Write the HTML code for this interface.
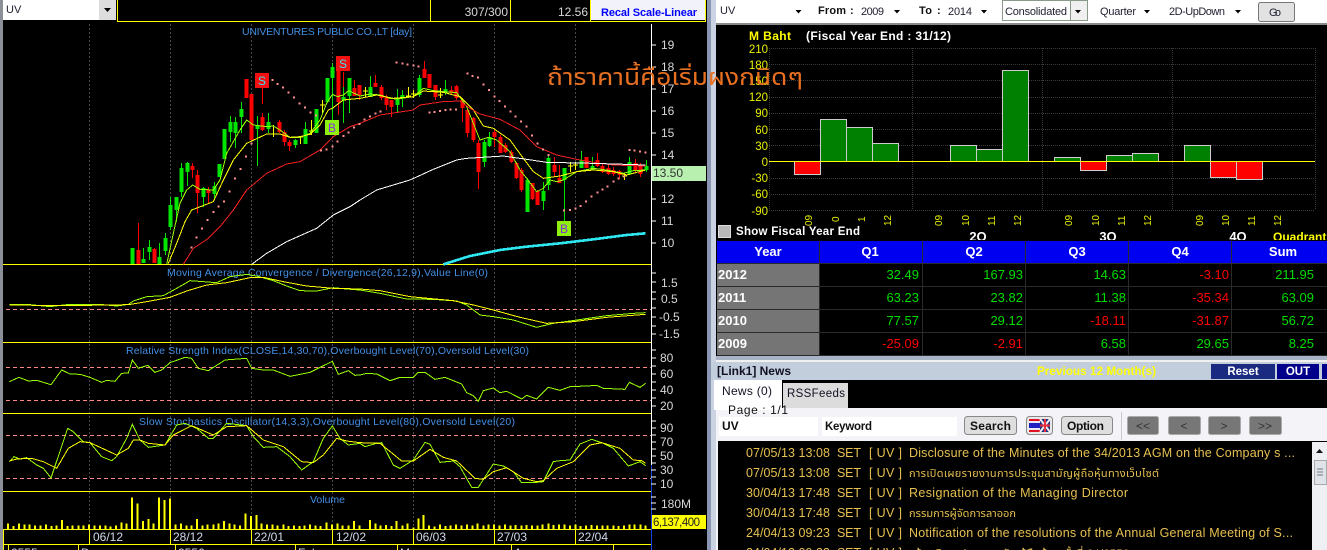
<!DOCTYPE html>
<html><head><meta charset="utf-8"><title>UV</title>
<style>
html,body{margin:0;padding:0;background:#000;width:1327px;height:550px;overflow:hidden}
svg{display:block;position:absolute;left:0;top:0}
text{font-family:"Liberation Sans","Noto Sans Thai","Loma","Garuda","DejaVu Sans","Noto Sans CJK JP",sans-serif}
.c{shape-rendering:crispEdges}
.ax{fill:#d8d8d8;font-size:12px}
.ttl{fill:#428fe6;font-size:10.5px}
.dt{fill:#d0d8e8;font-size:12px}
.yl{fill:#e8f000;font-size:11.5px;text-anchor:end}
.xl{fill:#e8f000;font-size:10px}
.yr{fill:#fff;font-size:13px;font-weight:bold}
.g{fill:#0d0;font-size:13px;text-anchor:end}
.r{fill:#f00;font-size:13px;text-anchor:end}
.h{fill:#fff;font-size:13px;font-weight:bold;text-anchor:middle}
.n{fill:#e6c050;font-size:12.5px}
.tb{fill:#223;font-size:11px}
.bd{fill:#111;font-size:11px;font-weight:bold}
</style></head><body>
<svg width="1327" height="550" viewBox="0 0 1327 550" xmlns="http://www.w3.org/2000/svg">
<rect width="1327" height="550" fill="#000"/>
<!-- left strip -->
<rect x="0" y="0" width="3" height="550" fill="#8a8f98"/>
<!-- left top bar -->
<rect x="3" y="0" width="113" height="20" fill="#fff"/>
<rect x="99" y="0" width="17" height="20" fill="#ddd"/>
<path d="M104 8h7l-3.500 4z" fill="#000"/>
<text x="6" y="13" class="tb" fill="#223">UV</text>
<path d="M117.500 0V21.500H705.500V0M430.500 0V21M510.500 0V21M590.500 0V21" fill="none" stroke="#ff0"/>
<text x="508" y="16" class="ax" text-anchor="end">307/300</text>
<text x="588" y="16" class="ax" text-anchor="end">12.56</text>
<rect x="591" y="0" width="114" height="20" fill="#f2f2fa"/>
<text x="601" y="16" fill="#00f" font-size="11px" font-weight="bold" textLength="96">Recal Scale-Linear</text>
<!-- grid -->
<path d="M89.500 24V529M170.500 24V529M251.500 24V529M332.500 24V529M413.500 24V529M494.500 24V529M575.500 24V529" stroke="#4a4a4a" stroke-dasharray="2 2" fill="none"/>
<!-- panel lines -->
<path d="M3 264.500H651M3 342.500H651M3 413.500H651M3 491.500H651M3 529.500H651M3 544.500H651" stroke="#ff0" fill="none"/>
<path d="M3.500 529V550M8.500 544V550M78.500 544V550M175.500 544V550M295.500 544V550M397.500 544V550M511.500 544V550M613.500 544V550M89.500 529V544M170.500 529V544M251.500 529V544M332.500 529V544M413.500 529V544M494.500 529V544M575.500 529V544" stroke="#ff0" fill="none"/>
<!-- axis -->
<path d="M651.500 24V465" stroke="#fff" fill="none"/>
<path d="M651.500 465V550" stroke="#1a3fe0" fill="none"/>
<path class="c" d="M651 45h5M651 67h5M651 89h5M651 111h5M651 133h5M651 155h5M651 177h5M651 199h5M651 221h5M651 243h5M651 273h5M651 282h5M651 292h5M651 299h5M651 308h5M651 317h5M651 326h5M651 334h5M651 350h5M651 358h5M651 366h5M651 374h5M651 382h5M651 390h5M651 398h5M651 406h5M651 421h5M651 428h5M651 435h5M651 442h5M651 449h5M651 456h5M651 463h5M651 470h5M651 477h5M651 484h5M651 497h5M651 503h5M651 509h5" stroke="#fff" fill="none"/>
<g class="ax">
<text x="661" y="49">19</text><text x="661" y="71">18</text><text x="661" y="93">17</text><text x="661" y="115">16</text><text x="661" y="137">15</text><text x="661" y="159">14</text><text x="661" y="203">12</text><text x="661" y="225">11</text><text x="661" y="247">10</text>
<text x="661" y="287">1.5</text><text x="661" y="303">0.5</text><text x="659" y="321">-0.5</text><text x="659" y="338">-1.5</text>
<text x="660" y="362">80</text><text x="660" y="378">60</text><text x="660" y="394">40</text><text x="660" y="410">20</text>
<text x="660" y="432">90</text><text x="660" y="446">70</text><text x="660" y="460">50</text><text x="660" y="474">30</text><text x="660" y="488">10</text>
<text x="661" y="508">180M</text>
</g>
<rect x="652" y="166" width="54" height="15" fill="#b8f0b0"/>
<text x="653" y="177" fill="#333" font-size="12px">13.50</text>
<rect x="652" y="515" width="54" height="14" fill="#ff0"/>
<text x="653" y="526" fill="#222" font-size="11.500px" textLength="47">6,137,400</text>
<!-- titles -->
<text x="242" y="35" class="ttl" textLength="170">UNIVENTURES PUBLIC CO.,LT [day]</text>
<text x="167" y="276" class="ttl" textLength="321">Moving Average Convergence / Divergence(26,12,9),Value Line(0)</text>
<text x="126" y="354" class="ttl" textLength="403">Relative Strength Index(CLOSE,14,30,70),Overbought Level(70),Oversold Level(30)</text>
<text x="139" y="425" class="ttl" textLength="376">Slow Stochastics Oscillator(14,3,3),Overbought Level(80),Oversold Level(20)</text>
<text x="310" y="503" class="ttl" textLength="35">Volume</text>
<!-- dates -->
<g class="dt"><text x="93" y="541">06/12</text><text x="173" y="541">28/12</text><text x="254" y="541">22/01</text><text x="336" y="541">12/02</text><text x="416" y="541">06/03</text><text x="497" y="541">27/03</text><text x="578" y="541">22/04</text>
<text x="11" y="557">2555</text><text x="81" y="557">D</text><text x="178" y="557">2556</text><text x="298" y="557">Feb</text><text x="400" y="557">Mar</text><text x="514" y="557">Apr</text></g>

<!-- candles -->
<g class="c">
<path fill="none" stroke="#00e600" stroke-width="1" d="M143.500 248V263M149.500 240V260M159.500 243V264M165.500 233V255M170.500 197V230M176.500 197V222M181.500 163V197M187.500 162V186M203.500 187V207M214.500 182V200M224.500 129V159M230.500 116V142M235.500 117V148M241.500 102V133M257.500 116V166M268.500 113V133M295.500 139V148M305.500 122V144M316.500 109V133M332.500 63V127M343.500 85V123M349.500 78V113M370.500 76V97M397.500 89V112M402.500 90V107M419.500 75V97M445.500 80V95M484.500 140V167M489.500 132V147M527.500 178V212M543.500 182V210M548.500 155V190M564.500 168V222M581.500 151V168M592.500 157V170M629.500 157V175M646.500 160V172"/>
<path fill="none" stroke="#00e600" stroke-width="4" d="M132.500 248V264M143.500 259V263M149.500 247V252M159.500 257V264M165.500 238V251M170.500 205V227M176.500 197V210M181.500 168V192M187.500 163V172M203.500 188V197M214.500 186V194M219.500 164V177M224.500 129V159M230.500 122V132M235.500 122V133M241.500 109V117M257.500 125V129M268.500 122V129M295.500 140V145M305.500 129V144M316.500 109V133M327.500 78V102M332.500 67V78M343.500 97V100M349.500 78V96M370.500 87V97M397.500 99V105M402.500 95V98M419.500 78V95M445.500 89V93M484.500 142V162M489.500 137V146M527.500 180V212M543.500 191V201M548.500 158V185M564.500 168V180M581.500 160V168M592.500 166V170M629.500 162V174M646.500 166V170"/>
<path fill="none" stroke="#f00" stroke-width="1" d="M138.500 223V264M154.500 248V263M192.500 163V178M197.500 170V213M208.500 187V203M262.500 88V104M262.500 113V131M279.500 120V133M284.500 130V146M289.500 140V151M338.500 63V115M343.500 72V87M354.500 80V96M359.500 85V100M375.500 75V87M381.500 85V100M386.500 95V110M391.500 100V117M424.500 61V78M435.500 85V100M451.500 86V95M456.500 85V100M462.500 98V122M467.500 108V137M473.500 117V142M478.500 140V189M494.500 130V147M500.500 135V153M505.500 143V153M511.500 150V163M516.500 162V179M521.500 168V192M532.500 183V200M537.500 190V205M554.500 157V177M559.500 165V183M586.500 157V168M597.500 153V167M602.500 163V173M608.500 165V175M613.500 167V176M619.500 170V179M635.500 159V172M640.500 163V177"/>
<path fill="none" stroke="#f00" stroke-width="4" d="M138.500 250V264M154.500 249V263M192.500 166V170M197.500 175V193M208.500 190V193M246.500 79V98M251.500 94V140M262.500 117V130M279.500 122V132M284.500 132V142M289.500 142V146M338.500 70V102M354.500 88V96M359.500 85V95M375.500 83V87M381.500 87V98M386.500 97V105M391.500 100V107M424.500 69V78M429.500 74V88M435.500 85V97M451.500 90V93M456.500 86V98M462.500 100V108M467.500 110V133M473.500 118V140M478.500 143V172M494.500 132V137M500.500 137V153M505.500 145V152M511.500 152V162M516.500 163V178M521.500 170V190M532.500 183V199M537.500 191V205M554.500 165V172M559.500 178V183M586.500 157V168M597.500 160V166M602.500 166V172M608.500 168V174M613.500 170V174M619.500 171V175M635.500 163V171M640.500 166V174"/>
<path fill="none" stroke="#ff0" stroke-width="1" d="M273.500 125V137M271 134h5M300.500 136V144M298 137h5M311.500 120V135M309 131h5M322.500 100V113M320 105h5M365.500 87V97M363 91h5M408.500 87V97M406 96h5M413.500 90V98M411 94h5M440.500 88V98M438 95h5M570.500 162V172M568 166h5M575.500 162V170M573 165h5M624.500 173V180M622 176h5"/>
</g>
<!-- MAs zoom1 -->
<g class="c" transform="scale(.33333)" fill="none">
<path stroke="#9f0" stroke-width="3" d="M500 793L520 700 540 610 560 570 578 555 600 568 640 570 660 540 680 460 720 390 740 360 760 375 800 380 820 378 840 390 870 412 900 412 930 400 960 360 980 310 997 283 1012 290 1030 285 1046 272 1080 288"/>
<path stroke="#ff0" stroke-width="3" d="M505 790L530 730 555 665 575 630 640 605 670 540 700 480 740 430 800 402 840 402 870 412 900 410 930 403 960 375 985 330 997 325 1030 300 1080 295"/>
<path stroke="#f02020" stroke-width="3" d="M550 793L580 745 625 715 660 680 700 630 740 570 800 520 860 492 900 485 960 450 1000 410 1050 380 1080 370"/>
<path stroke="#fff" stroke-width="3" d="M755 793L800 760 860 725 950 685 1000 645 1050 620 1080 600"/>
</g>
<g class="c" transform="translate(360,0) scale(.33333)" fill="none">
<path stroke="#9f0" stroke-width="3" d="M0 288L30 282 60 285 90 295 110 297 160 290 190 265 220 272 290 278 320 320 340 370 360 420 385 412 410 420 450 455 480 510 500 535 530 575 550 565 570 540 590 545 610 540 650 515 700 505 740 510 790 520 820 512 857 510"/>
<path stroke="#ff0" stroke-width="3" d="M0 295L50 285 100 295 160 290 190 273 250 277 300 290 340 330 370 378 400 385 450 420 490 475 520 515 550 535 600 528 650 515 700 510 760 515 800 525 857 510"/>
<path stroke="#f02020" stroke-width="3" d="M0 370L60 345 160 330 180 315 250 305 300 303 330 325 360 342 420 358 480 390 530 440 590 465 650 478 720 490 760 495 857 498"/>
<path stroke="#fff" stroke-width="3" d="M0 600L50 570 150 540 220 508 290 480 320 475 430 468 500 478 560 487 700 490 857 495"/>
<path stroke="#2ee6f0" stroke-width="8" d="M250 793L330 768 420 750 500 740 600 730 700 718 800 705 857 700"/>
</g>
<!-- SAR -->
<g class="c" transform="scale(.33333)" fill="none" stroke="#ff9090" stroke-width="6">
<path d="M572 742h6M587 712h6M603 685h6M620 660h6M637 636h6M653 620h6M669 604h6M685 575h6M702 535h6M718 507h6M735 469h6M751 430h6M815 240h6M830 252h6M846 263h6M863 277h6M879 292h6M896 310h6M912 323h6M929 338h6M945 347h6M960 452h6M977 448h6M994 440h6M1009 424h6M1027 408h6M1042 397h6M1059 382h6M1075 372h6"/>
</g>
<g class="c" transform="translate(360,0) scale(.33333)" fill="none" stroke="#ff9090" stroke-width="6">
<path d="M11 358h6M27 350h6M43 340h6M59 335h6M107 187h6M124 190h6M140 193h6M157 197h6M173 200h6M205 338h6M221 336h6M237 333h6M253 330h6M269 328h6M285 328h6M319 220h6M335 228h6M351 232h6M367 253h6M384 270h6M400 290h6M416 303h6M432 320h6M448 335h6M464 350h6M480 365h6M497 380h6M513 407h6M529 430h6M546 448h6M562 465h6M609 632h6M627 630h6M643 625h6M659 618h6M675 605h6M692 590h6M709 577h6M724 568h6M740 560h6M757 545h6M773 535h6M789 530h6M805 450h6M821 452h6M837 455h6M853 458h6"/>
</g>
<!-- markers -->
<rect x="255" y="73" width="14" height="15" fill="#f01010"/><text x="258" y="85" fill="#40e0f0" font-size="12px">S</text>
<rect x="336" y="56" width="14" height="15" fill="#f01010"/><text x="339" y="68" fill="#40e0f0" font-size="12px">S</text>
<rect x="325" y="120" width="14" height="15" fill="#8fef10"/><text x="328" y="132" fill="#8030e0" font-size="12px">B</text>
<rect x="557" y="221" width="14" height="15" fill="#8fef10"/><text x="560" y="233" fill="#8030e0" font-size="12px">B</text>
<!-- dashed levels -->
<path d="M6 309.500H651M6 367.500H651M6 400.500H651M6 435.500H651M6 478.500H651" stroke="#f88" stroke-dasharray="4 3" fill="none"/>
<!-- indicators -->
<g class="c" transform="translate(0,260) scale(.33333)" fill="none" stroke-width="3">
<path stroke="#9f0" d="M28 133L80 133 150 140 200 134 300 133 350 138 385 133 400 123 440 110 490 107 530 85 570 62 610 65 650 68 690 50 740 43 770 48 820 62 860 78 900 92 950 93 1000 83 1040 87 1080 90"/>
<path stroke="#ff0" d="M28 135L200 137 385 134 440 125 510 112 560 93 620 75 680 68 750 53 790 52 850 65 920 78 1000 85 1080 87"/>
<path stroke="#9f0" d="M28 365L57 352 85 363 110 361 153 374 185 330 210 342 240 343 270 352 305 367 320 361 345 364 365 340 385 339 397 300 415 325 443 316 465 337 485 330 510 308 555 292 575 295 595 325 625 332 675 300 740 295 755 325 790 330 820 330 870 349 930 337 997 304 1015 343 1045 332 1065 346 1080 345"/>
<path stroke="#9f0" d="M28 605L42 590 60 597 80 593 110 615 130 625 153 654 203 505 220 515 250 545 270 548 305 590 335 602 350 590 380 535 397 493 420 540 445 562 495 555 530 495 555 490 590 505 625 535 640 535 680 490 740 497 760 530 790 562 830 560 870 590 905 630 940 605 970 535 997 498 1020 535 1045 555 1080 550"/>
<path stroke="#ff0" d="M28 603L50 597 95 595 130 605 170 625 205 565 240 545 270 548 350 585 385 565 400 540 420 540 445 550 495 555 520 525 575 497 640 525 680 500 740 497 790 540 850 560 905 605 940 608 970 585 1010 535 1040 543 1080 548"/>
<path stroke="#ff0" stroke-width="6" d="M24 808V790M40 808V798M57 808V790M73 808V793M89 808V793M105 808V796M121 808V796M138 808V793M154 808V798M170 808V796M186 808V780M202 808V798M218 808V796M235 808V796M251 808V796M267 808V793M283 808V797M300 808V797M316 808V797M332 808V799M348 808V796M364 808V787M380 808V790M396 808V712M413 808V730M429 808V783M445 808V777M461 808V790M477 808V712M494 808V720M510 808V715M526 808V793M543 808V790M559 808V797M575 808V796M591 808V777M607 808V797M623 808V793M640 808V793M656 808V790M672 808V783M688 808V790M704 808V793M720 808V796M737 808V760M753 808V768M769 808V765M785 808V790M801 808V793M817 808V793M833 808V796M850 808V793M866 808V798M882 808V796M898 808V798M914 808V796M930 808V793M946 808V796M962 808V798M980 808V787M996 808V793M1012 808V790M1028 808V797M1045 808V796M1062 808V783M1078 808V797"/>
</g>
<g class="c" transform="translate(360,260) scale(.33333)" fill="none" stroke-width="3">
<path stroke="#9f0" d="M0 90L60 100 140 117 220 118 290 123 320 135 360 165 400 170 460 180 530 202 580 190 650 180 740 167 820 160 857 158"/>
<path stroke="#ff0" d="M0 87L60 92 150 110 280 122 340 135 400 150 480 172 560 190 640 185 740 172 857 163"/>
<path stroke="#9f0" d="M0 345L20 340 50 342 90 362 120 352 160 352 175 337 195 337 225 358 255 352 305 372 320 398 340 407 355 424 370 392 400 384 420 398 440 394 485 417 500 406 530 417 565 382 600 391 630 380 680 378 710 376 730 385 795 388 808 367 840 382 857 370"/>
<path stroke="#9f0" d="M0 550L15 560 50 550 65 548 100 615 120 625 160 600 195 547 210 553 240 607 280 603 300 620 335 682 355 682 400 612 430 618 460 635 485 668 520 668 550 665 580 605 600 602 630 600 660 552 695 538 730 550 760 565 805 618 840 605 857 617"/>
<path stroke="#ff0" d="M0 548L60 550 125 603 160 603 210 568 250 592 290 603 345 655 370 658 400 635 440 623 490 655 530 665 550 662 590 625 640 605 690 555 725 548 780 565 820 600 845 602 857 610"/>
<path stroke="#ff0" stroke-width="6" d="M30 808V780M46 808V790M62 808V797M78 808V795M94 808V798M110 808V783M127 808V796M143 808V790M160 808V803M175 808V775M191 808V765M207 808V797M223 808V800M240 808V793M256 808V798M272 808V796M288 808V793M305 808V797M321 808V793M337 808V797M353 808V790M370 808V797M386 808V793M402 808V793M418 808V797M435 808V793M451 808V797M467 808V795M484 808V797M500 808V795M516 808V796M532 808V797M548 808V793M565 808V790M581 808V795M597 808V793M613 808V793M630 808V797M646 808V793M662 808V798M678 808V796M695 808V795M711 808V797M727 808V797M743 808V797M760 808V797M776 808V798M792 808V797M808 808V793M824 808V793M841 808V793M857 808V797"/>
</g>

<!-- separator -->
<rect x="707" y="0" width="4" height="550" fill="#8a96b2"/>
<rect x="711" y="0" width="5" height="550" fill="#cbd3e2"/>

<!-- RIGHT toolbar -->
<rect x="716" y="0" width="611" height="23" fill="#fff"/>
<rect x="716" y="23" width="611" height="2" fill="#8a8a8a"/>
<text x="720" y="14" class="tb">UV</text>
<text x="818" y="14" class="bd" textLength="28">From</text><text x="850" y="14" class="bd">:</text>
<text x="861" y="15" class="tb" textLength="23">2009</text>
<text x="919" y="14" class="bd" textLength="13">To</text><text x="937" y="14" class="bd">:</text>
<text x="948" y="15" class="tb" textLength="24">2014</text>
<rect x="1002.500" y="0.500" width="85" height="20" fill="#f0f0f0" stroke="#8a9a8a"/>
<rect x="1003" y="1" width="67" height="19" fill="#fff"/>
<path d="M1070.500 1V20" stroke="#8a9a8a"/>
<text x="1005" y="15" class="tb" textLength="62">Consolidated</text>
<text x="1100" y="15" class="tb" textLength="36">Quarter</text>
<text x="1169" y="15" class="tb" textLength="56">2D-UpDown</text>
<g fill="#000"><path d="M795.500 10h6l-3 3.500zM894 10h6l-3 3.500zM981 10h6l-3 3.500zM1075 10h6l-3 3.500zM1144 10h6l-3 3.500zM1235 10h6l-3 3.500z"/></g>
<rect x="1258.500" y="2.500" width="36" height="19" rx="2" fill="#e2e2e2" stroke="#777"/>
<text x="1269" y="16" class="tb" textLength="12">Go</text>

<!-- bar chart -->
<text x="749" y="40" fill="#ff0" font-size="12px" font-weight="bold" textLength="42">M Baht</text>
<text x="806" y="40" fill="#fff" font-size="12px" font-weight="bold" textLength="145">(Fiscal Year End : 31/12)</text>
<path d="M769 48.500H1315M769 64.500H1315M769 80.500H1315M769 97.500H1315M769 113.500H1315M769 129.500H1315M769 145.500H1315M769 178.500H1315M769 194.500H1315M769 210.500H1315M769.500 48V210M912.500 48V210M1042.500 48V210M1172.500 48V210M1315.500 48V210" stroke="#3a3a3a" stroke-dasharray="1 1" fill="none"/>
<g stroke="#ccc" stroke-width="1">
<rect x="794.500" y="161.500" width="26" height="13" fill="#f00"/>
<rect x="820.500" y="119.500" width="26" height="42" fill="#008000"/>
<rect x="846.500" y="127.500" width="26" height="34" fill="#008000"/>
<rect x="872.500" y="143.500" width="26" height="18" fill="#008000"/>
<rect x="950.500" y="145.500" width="26" height="16" fill="#008000"/>
<rect x="976.500" y="149.500" width="26" height="12" fill="#008000"/>
<rect x="1002.500" y="70.500" width="26" height="91" fill="#008000"/>
<rect x="1054.500" y="157.500" width="26" height="4" fill="#008000"/>
<rect x="1080.500" y="161.500" width="26" height="9" fill="#f00"/>
<rect x="1106.500" y="155.500" width="26" height="6" fill="#008000"/>
<rect x="1132.500" y="153.500" width="26" height="8" fill="#008000"/>
<rect x="1184.500" y="145.500" width="26" height="16" fill="#008000"/>
<rect x="1210.500" y="161.500" width="26" height="16" fill="#f00"/>
<rect x="1236.500" y="161.500" width="26" height="18" fill="#f00"/>
</g>
<path d="M769 161.500H1315" stroke="#ff0"/>
<g class="yl"><text x="768" y="53">210</text><text x="768" y="69">180</text><text x="768" y="85">150</text><text x="768" y="101">120</text><text x="768" y="117">90</text><text x="768" y="134">60</text><text x="768" y="150">30</text><text x="768" y="166">0</text><text x="768" y="182">-30</text><text x="768" y="198">-60</text><text x="768" y="215">-90</text></g>
<g class="xl">
<text transform="translate(812,226) rotate(-90)">09</text><text transform="translate(839,222) rotate(-90)">0</text><text transform="translate(865,222) rotate(-90)">1</text><text transform="translate(891,226) rotate(-90)">12</text>
<text transform="translate(942,226) rotate(-90)">09</text><text transform="translate(969,226) rotate(-90)">10</text><text transform="translate(995,226) rotate(-90)">11</text><text transform="translate(1021,226) rotate(-90)">12</text>
<text transform="translate(1072,226) rotate(-90)">09</text><text transform="translate(1099,226) rotate(-90)">10</text><text transform="translate(1125,226) rotate(-90)">11</text><text transform="translate(1151,226) rotate(-90)">12</text>
<text transform="translate(1203,226) rotate(-90)">09</text><text transform="translate(1229,226) rotate(-90)">10</text><text transform="translate(1255,226) rotate(-90)">11</text><text transform="translate(1281,226) rotate(-90)">12</text>
</g>
<rect x="718.500" y="225.500" width="12" height="12" fill="#b8b8b8" stroke="#ddd"/>
<text x="736" y="235" fill="#fff" font-size="11.500px" font-weight="bold" textLength="124">Show Fiscal Year End</text>
<g fill="#fff" font-size="13px" font-weight="bold" text-anchor="middle"><text x="978" y="241">2Q</text><text x="1108" y="241">3Q</text><text x="1238" y="241">4Q</text></g>
<text x="1273" y="241" fill="#ff0" font-size="12px" font-weight="bold">Quadrant</text>

<!-- table -->
<rect x="716" y="240" width="611" height="116" fill="#000"/>
<rect x="717" y="241" width="610" height="22" fill="#0000f0"/>
<rect x="717" y="263" width="102" height="93" fill="#757575"/>
<path d="M717 263.500H1327M717 286.500H1327M717 309.500H1327M717 332.500H1327M717 355.500H1327M819.500 241V356M922.500 241V356M1025.500 241V356M1128.500 241V356M1231.500 241V356" stroke="#2a2a2a" fill="none"/>
<g class="h"><text x="768" y="256">Year</text><text x="870" y="256">Q1</text><text x="974" y="256">Q2</text><text x="1077" y="256">Q3</text><text x="1180" y="256">Q4</text><text x="1283" y="256">Sum</text></g>
<g class="yr"><text x="718" y="279">2012</text><text x="718" y="302">2011</text><text x="718" y="325">2010</text><text x="718" y="348">2009</text></g>
<text x="919" y="279" class="g">32.49</text><text x="1023" y="279" class="g">167.93</text><text x="1126" y="279" class="g">14.63</text><text x="1229" y="279" class="r">-3.10</text><text x="1314" y="279" class="g">211.95</text>
<text x="919" y="302" class="g">63.23</text><text x="1023" y="302" class="g">23.82</text><text x="1126" y="302" class="g">11.38</text><text x="1229" y="302" class="r">-35.34</text><text x="1314" y="302" class="g">63.09</text>
<text x="919" y="325" class="g">77.57</text><text x="1023" y="325" class="g">29.12</text><text x="1126" y="325" class="r">-18.11</text><text x="1229" y="325" class="r">-31.87</text><text x="1314" y="325" class="g">56.72</text>
<text x="919" y="348" class="r">-25.09</text><text x="1023" y="348" class="r">-2.91</text><text x="1126" y="348" class="g">6.58</text><text x="1229" y="348" class="g">29.65</text><text x="1314" y="348" class="g">8.25</text>

<!-- news header -->
<rect x="716" y="356" width="611" height="5" fill="#a8b4c6"/>
<rect x="716" y="360" width="611" height="2" fill="#f0f0f0"/>
<rect x="711" y="362" width="616" height="18" fill="#c3cedd"/>
<text x="717" y="375" fill="#112" font-size="12px" font-weight="bold" textLength="74">[Link1] News</text>
<text x="1037" y="375" fill="#ff0" font-size="11.500px" font-weight="bold" textLength="119">Previous 12 Month(s)</text>
<rect x="1211" y="364" width="64" height="15" fill="#1a2a80"/>
<text x="1243" y="375" fill="#fff" font-size="11.500px" font-weight="bold" text-anchor="middle">Reset</text>
<rect x="1277" y="364" width="42" height="15" fill="#00008b"/>
<text x="1298" y="375" fill="#fff" font-size="11.500px" font-weight="bold" text-anchor="middle">OUT</text>
<rect x="1322" y="364" width="5" height="15" fill="#00008b"/>
<rect x="714" y="380" width="613" height="28" fill="#000"/>
<rect x="716" y="408" width="611" height="142" fill="#f4f4f8"/>
<rect x="714" y="380" width="68" height="30" fill="#fff"/>
<text x="722" y="395" fill="#112" font-size="12px" textLength="50">News (0)</text>
<rect x="783" y="383" width="65" height="25" fill="#dcdcdc"/>
<text x="787" y="397" fill="#112" font-size="11.500px" textLength="58">RSSFeeds</text>
<text x="728" y="414" fill="#111" font-size="12px" textLength="60">Page : 1/1</text>
<rect x="719" y="417" width="99" height="19" fill="#fff"/>
<text x="722" y="430" fill="#111" font-size="12px" font-weight="bold">UV</text>
<rect x="822" y="417" width="135" height="19" fill="#fff"/>
<text x="825" y="430" fill="#111" font-size="11.500px" font-weight="bold" textLength="47">Keyword</text>
<rect x="964.500" y="416.500" width="52" height="18" rx="3" fill="#dedede" stroke="#888"/>
<text x="970" y="430" fill="#111" font-size="12px" font-weight="bold" textLength="41">Search</text>
<rect x="1026.500" y="416.500" width="26" height="18" rx="3" fill="#e8e8e8" stroke="#888"/>
<rect x="1029" y="419" width="11" height="13" fill="#e8e8f0"/>
<rect x="1029" y="419" width="11" height="2" fill="#e01020"/><rect x="1029" y="423" width="11" height="5" fill="#2020c0"/><rect x="1029" y="430" width="11" height="2" fill="#e01020"/>
<rect x="1040" y="419" width="10" height="13" fill="#20307a"/>
<path d="M1040 419L1050 432M1050 419L1040 432" stroke="#eee" stroke-width="2"/>
<path d="M1045 419V432M1040 425.500H1050" stroke="#e83040" stroke-width="2"/>
<rect x="1061.500" y="416.500" width="51" height="18" rx="3" fill="#dedede" stroke="#888"/>
<text x="1067" y="430" fill="#111" font-size="12px" font-weight="bold" textLength="37">Option</text>
<path d="M1121.500 412V440" stroke="#ccc"/>
<g fill="#777" stroke="#aaa"><rect x="1127.500" y="416.500" width="31" height="18" rx="2"/><rect x="1168.500" y="416.500" width="32" height="18" rx="2"/><rect x="1208.500" y="416.500" width="32" height="18" rx="2"/><rect x="1249.500" y="416.500" width="32" height="18" rx="2"/></g>
<g fill="#333" font-size="12px" text-anchor="middle"><text x="1143" y="430">&lt;&lt;</text><text x="1184" y="430">&lt;</text><text x="1224" y="430">&gt;</text><text x="1265" y="430">&gt;&gt;</text></g>

<!-- news list -->
<rect x="718" y="441" width="609" height="109" fill="#000"/>
<rect x="1312" y="442" width="15" height="108" fill="#eef0f4"/>
<path d="M1316 453l3.500-4 3.500 4z" fill="#111"/>
<rect x="1314.500" y="460.500" width="12" height="24" fill="#dfe3ea" stroke="#aaa"/>
<path d="M1317 469h6M1317 472h6M1317 475h6" stroke="#777"/>
<g class="n">
<text x="746" y="457" textLength="84">07/05/13 13:08</text><text x="837" y="457" textLength="24">SET</text><text x="869" y="457" textLength="33">[ UV ]</text><text x="909" y="457" textLength="386">Disclosure of the Minutes of the 34/2013 AGM on the Company s ...</text>
<text x="746" y="477" textLength="84">07/05/13 13:08</text><text x="837" y="477" textLength="24">SET</text><text x="869" y="477" textLength="33">[ UV ]</text><text x="909" y="477" font-size="11px" textLength="250">การเปิดเผยรายงานการประชุมสามัญผู้ถือหุ้นทางเว็บไซต์</text>
<text x="746" y="497" textLength="84">30/04/13 17:48</text><text x="837" y="497" textLength="24">SET</text><text x="869" y="497" textLength="33">[ UV ]</text><text x="909" y="497" textLength="219">Resignation of the Managing Director</text>
<text x="746" y="517" textLength="84">30/04/13 17:48</text><text x="837" y="517" textLength="24">SET</text><text x="869" y="517" textLength="33">[ UV ]</text><text x="909" y="517" font-size="11px" textLength="107">กรรมการผู้จัดการลาออก</text>
<text x="746" y="537" textLength="84">24/04/13 09:23</text><text x="837" y="537" textLength="24">SET</text><text x="869" y="537" textLength="33">[ UV ]</text><text x="909" y="537" textLength="384">Notification of the resolutions of the Annual General Meeting of S...</text>
<text x="746" y="557" textLength="84">24/04/13 09:23</text><text x="837" y="557" textLength="24">SET</text><text x="869" y="557" textLength="33">[ UV ]</text><text x="909" y="557" font-size="11px" textLength="220">แจ้งมติการประชุมสามัญผู้ถือหุ้น ครั้งที่ 34/2556</text>
</g>
<!-- handwritten overlay -->
<text x="547" y="85" fill="#e87020" font-size="23px" textLength="256" lengthAdjust="spacingAndGlyphs">ถ้าราคานี้คือเริ่มผงกนิดๆ</text>
</svg>
</body></html>
